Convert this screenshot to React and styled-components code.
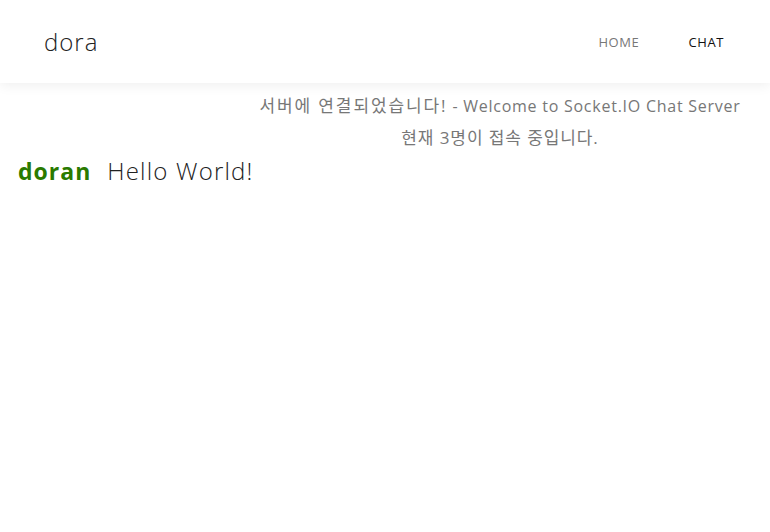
import React from "react";
import styled, { createGlobalStyle } from "styled-components";

const GlobalStyle = createGlobalStyle`
  html, body {
    margin: 0;
    padding: 0;
    background: #ffffff;
    font-family: "Open Sans", "Noto Sans CJK KR", sans-serif;
  }
`;

const App = () => {
  const messages = [{ user: "doran", text: "Hello World!" }];

  return (
    <Page>
      <GlobalStyle />
      <Navbar>
        <Brand>dora</Brand>
        <NavList>
          <NavItem>HOME</NavItem>
          <NavItem active>CHAT</NavItem>
        </NavList>
      </Navbar>

      <Notice>
        <NoticeLine>
          <Hangul spacing={1.9}>서버에 연결되었습니다!</Hangul> - Welcome to Socket.IO Chat Server
        </NoticeLine>
        <NoticeLine>
          <Hangul spacing={0.9}>현재 3명이 접속 중입니다.</Hangul>
        </NoticeLine>
      </Notice>

      {messages.map((msg, index) => (
        <MessageRow key={index}>
          <UserName>{msg.user}</UserName>
          <MessageText>{msg.text}</MessageText>
        </MessageRow>
      ))}
    </Page>
  );
};

export default App;

const Page = styled.div`
  width: 100%;
  min-height: 532px;
  background: #ffffff;
`;

const Navbar = styled.nav`
  height: 83px;
  display: flex;
  align-items: center;
  justify-content: space-between;
  padding: 0 46px 0 44px;
  background: #ffffff;
  box-shadow: 0 2px 12px rgba(0, 0, 0, 0.07);
  position: relative;
  z-index: 1;
`;

const Brand = styled.div`
  font-size: 24px;
  font-weight: 300;
  letter-spacing: 1px;
  color: #222;
`;

const NavList = styled.div`
  display: flex;
  align-items: center;
  gap: 49px;
`;

const NavItem = styled.div`
  font-size: 13px;
  font-weight: 500;
  letter-spacing: 0.6px;
  color: ${(p) => (p.active ? "#111" : "#777")};
`;

const Notice = styled.div`
  margin-left: 230px;
  padding-top: 7px;
  display: flex;
  flex-direction: column;
  align-items: center;
`;

const NoticeLine = styled.div`
  font-size: 16px;
  line-height: 31px;
  letter-spacing: 0.75px;
  color: #777;
  white-space: nowrap;
`;

const Hangul = styled.span`
  font-size: 17px;
  letter-spacing: ${(p) => p.spacing}px;
`;

const MessageRow = styled.div`
  display: flex;
  align-items: baseline;
  gap: 16px;
  padding: 0 18px;
`;

const UserName = styled.span`
  font-size: 23px;
  font-weight: 700;
  letter-spacing: 1px;
  color: #2a7a00;
`;

const MessageText = styled.span`
  font-size: 24px;
  font-weight: 300;
  letter-spacing: 1.2px;
  color: #222;
`;
